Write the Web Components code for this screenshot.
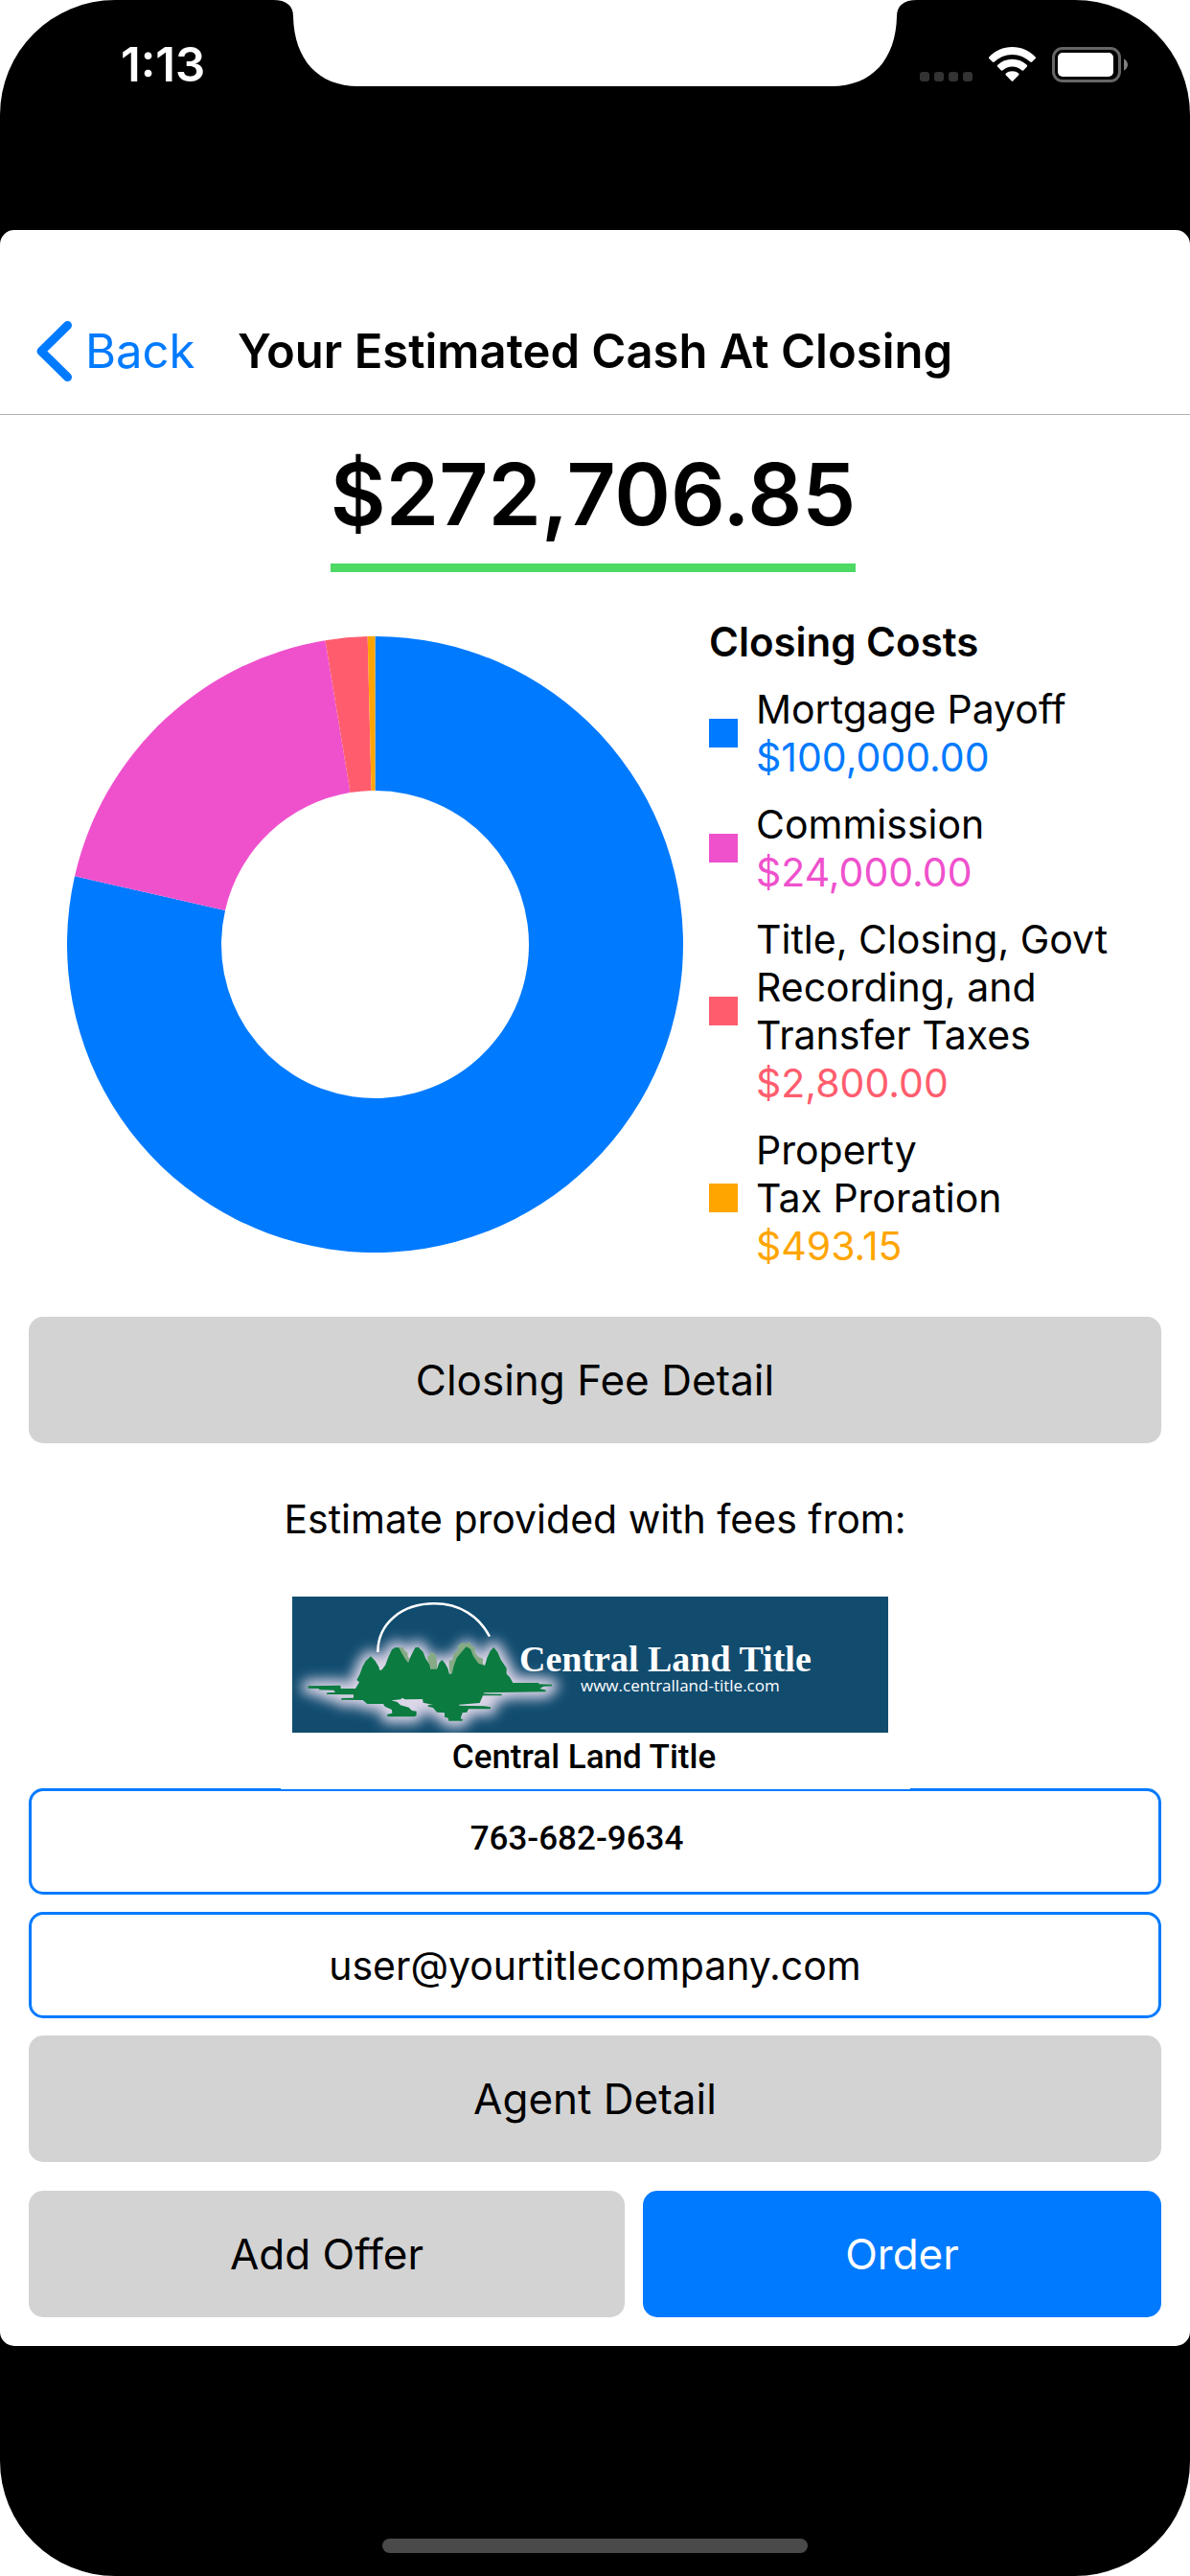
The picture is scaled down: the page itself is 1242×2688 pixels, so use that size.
<!DOCTYPE html>
<html lang="en">
<head>
<meta charset="utf-8">
<meta name="viewport" content="width=device-width, initial-scale=1">
<title>Your Estimated Cash At Closing</title>
<style>
  html { background: #fff; }
  body {
    margin: 0;
    color: #000;
    font-family: Inter, "Liberation Sans", sans-serif;
    font-size: 41px;
    line-height: 50px;
    --blue: #007aff;
    --grey: #d3d3d3;
    --green: #4cd964;
  }
</style>
</head>
<body>
<phone-shell>
  <status-bar slot="status" time="1:13"></status-bar>
  <closing-estimate></closing-estimate>
</phone-shell>

<script>
const define = (name, html, setup) => {
  const template = document.createElement('template');
  template.innerHTML = html;
  customElements.define(name, class extends HTMLElement {
    constructor() {
      super();
      this.attachShadow({ mode: 'open' }).append(template.content.cloneNode(true));
    }
    connectedCallback() {
      if (setup) setup(this, this.shadowRoot);
    }
  });
};

/* Black device body with rounded corners, a white sheet and the home indicator */
define('phone-shell', `
  <style>
    :host { display: flex; flex-direction: column; min-height: 100vh; background: #000; border-radius: 120px; overflow: hidden; }
    main { background: #fff; border-radius: 15px; }
    footer { flex: 1; min-height: 240px; box-sizing: border-box; display: flex; align-items: flex-end; justify-content: center; padding-bottom: 24px; }
    .home { width: 444px; max-width: 60%; height: 15px; border-radius: 8px; background: #4a4a4a; }
  </style>
  <slot name="status"></slot>
  <main><slot></slot></main>
  <footer><div class="home"></div></footer>
`);

define('status-bar', `
  <style>
    :host { display: grid; grid-template-columns: 1fr auto 1fr; align-items: start; height: 240px; color: #fff; }
    time { padding: 38px 0 0 126px; font-size: 49px; line-height: 60px; font-weight: 600; }
    svg { display: block; }
    .icons { display: flex; justify-content: flex-end; align-items: flex-end; gap: 17px; padding: 49px 65px 0 0; }
  </style>
  <time></time>
  <svg width="672" height="90" viewBox="0 0 672 90" aria-hidden="true">
    <path fill="#fff" d="M0 0C14 0 21 6 21 17C22 62 47 90 89 90H583C625 90 650 62 651 17C651 6 658 0 672 0Z"/>
  </svg>
  <div class="icons">
    <svg width="55" height="11" viewBox="0 0 55 11" fill="#333" aria-hidden="true">
      <rect width="10" height="10" rx="3"/><rect x="15" width="10" height="10" rx="3"/>
      <rect x="30" width="10" height="10" rx="3"/><rect x="45" width="10" height="10" rx="3"/>
    </svg>
    <svg width="49" height="37" viewBox="0 0 49 37" fill="#fff" aria-hidden="true">
      <path d="M24.500 0C34 0 42.500 4 48.500 10.200C49.200 11 49.200 11.700 48.500 12.300L45.200 15.600C44.500 16.300 43.800 16.200 43.200 15.600C38.300 10.900 31.700 8 24.500 8S10.700 10.900 5.800 15.600C5.200 16.200 4.500 16.300 3.800 15.600L.5 12.300C-.2 11.700-.2 11 .5 10.200C6.500 4 15 0 24.500 0Z"/>
      <path d="M24.500 12.700C30.500 12.700 35.700 15 39.700 18.700C40.400 19.400 40.400 20.200 39.700 20.800L36.300 24.200C35.700 24.900 35 24.900 34.300 24.300C31.700 22 28.300 20.500 24.500 20.500S17.300 22 14.700 24.300C14 24.900 13.300 24.900 12.700 24.200L9.300 20.800C8.600 20.200 8.600 19.400 9.300 18.700C13.300 15 18.500 12.700 24.500 12.700Z"/>
      <path d="M24.500 25.200C27.100 25.200 29.300 26 31 27.400C31.700 28 31.700 28.700 31.100 29.400L25.500 35.200C24.800 35.900 24.200 35.900 23.500 35.200L17.900 29.400C17.300 28.700 17.300 28 18 27.400C19.700 26 21.900 25.200 24.500 25.200Z"/>
    </svg>
    <svg width="79" height="37" viewBox="0 0 79 37" aria-hidden="true">
      <rect x="1.500" y="1.500" width="69" height="34" rx="9.500" fill="none" stroke="#666" stroke-width="3"/>
      <rect x="6" y="6" width="58" height="25" rx="5" fill="#fff"/>
      <path d="M75 12.500C77.500 13.500 79 16 79 18.500S77.500 23.500 75 24.500Z" fill="#808080"/>
    </svg>
  </div>
`, (host, root) => { root.querySelector('time').textContent = host.getAttribute('time'); });

define('nav-header', `
  <style>
    :host { display: grid; grid-template-columns: 1fr auto 1fr; align-items: center; box-sizing: border-box; height: 193px; padding: 61px 38px 0; border-bottom: 1px solid #b2b2b2; font-size: 49px; line-height: 60px; }
    a { display: flex; align-items: center; gap: 13px; color: var(--blue); text-decoration: none; }
    h1 { margin: 0; font: inherit; font-weight: 600; }
    svg { display: block; }
  </style>
  <a href="#back">
    <svg width="38" height="63" viewBox="0 0 38 63" fill="none" stroke="currentColor" stroke-width="9" stroke-linecap="round" stroke-linejoin="round" aria-hidden="true"><path d="M32.500 4.500L5 31.500L32.500 58.500"/></svg>
    <span>Back</span>
  </a>
  <h1><slot></slot></h1>
`);

define('cash-total', `
  <style>
    :host { display: flex; justify-content: center; padding: 29px 4px 0 0; }
    output { padding-bottom: 18px; border-bottom: 9px solid var(--green); font-size: 89px; line-height: 108px; font-weight: 600; }
  </style>
  <output><slot></slot></output>
`);

/* Ring whose slices follow the "values" and "colors" lists, clockwise from twelve o'clock */
define('donut-chart', `
  <style>
    :host { display: block; }
    svg { display: block; width: 100%; }
  </style>
  <svg viewBox="0 0 643 643" role="img" aria-label="Closing costs"></svg>
`, (host, root) => {
  const values = host.getAttribute('values').split(' ').map(Number);
  const colors = host.getAttribute('colors').split(' ');
  const total = values.reduce((a, b) => a + b, 0);
  const c = 321.5, outer = 321.5, inner = 160.5;
  const at = (r, t) => (c + r * Math.sin(t)).toFixed(2) + ' ' + (c - r * Math.cos(t)).toFixed(2);
  let angle = 0;
  root.querySelector('svg').innerHTML = values.map((v, i) => {
    const from = angle, to = angle += v / total * Math.PI * 2;
    const big = to - from > Math.PI ? 1 : 0;
    return `<path fill="${colors[i]}" d="M${at(outer, from)}A${outer} ${outer} 0 ${big} 1 ${at(outer, to)}L${at(inner, to)}A${inner} ${inner} 0 ${big} 0 ${at(inner, from)}Z"/>`;
  }).join('');
});

define('cost-item', `
  <style>
    :host { display: flex; align-items: center; gap: 19px; }
    i { flex: none; width: 30px; height: 30px; background: var(--tone); }
    b { display: block; font-weight: 400; color: var(--tone); }
  </style>
  <i></i>
  <div><slot></slot><b></b></div>
`, (host, root) => {
  host.style.setProperty('--tone', host.getAttribute('color'));
  root.querySelector('b').textContent = host.getAttribute('amount');
});

define('action-button', `
  <style>
    :host { display: block; }
    button { display: block; width: 100%; height: 132px; margin: 0; padding: 0; border: 0; border-radius: 15px; background: var(--grey); color: #000; font: inherit; font-size: 44px; cursor: pointer; }
    :host([primary]) button { background: var(--blue); color: #fff; }
  </style>
  <button type="button"><slot></slot></button>
`);

define('contact-link', `
  <style>
    :host { display: block; }
    a { display: flex; align-items: center; justify-content: center; box-sizing: border-box; height: 111px; border: 3px solid var(--blue); border-radius: 15px; color: #000; text-decoration: none; }
    :host([compact]) a { padding: 0 38px 5px 0; font-family: Roboto, sans-serif; font-size: 35px; font-weight: 500; }
  </style>
  <a><slot></slot></a>
`, (host, root) => { root.querySelector('a').href = host.getAttribute('to'); });

define('title-company', `
  <style>
    :host { display: block; position: relative; z-index: 1; box-sizing: border-box; width: 657px; max-width: 100%; margin: 0 auto -1px; padding: 0 23px 13px 12px; background: #fff; }
    svg { display: block; width: 100%; }
    p { margin: 6px 12px 0 0; text-align: center; font-family: Roboto, sans-serif; font-size: 35px; line-height: 40px; font-weight: 500; }
  </style>
  <svg viewBox="0 0 622 142">
    <defs>
      <filter id="halo" x="-20%" y="-40%" width="140%" height="180%"><feGaussianBlur stdDeviation="19"/></filter>
      <path id="land" d="M95 328L196 326L197 336L243 336L255 316L247 309L257 290L265 268L275 250L291 235L305 250L316 268L319 279L326 277L337 262L345 240L357 214L368 207L379 208L388 225L400 245L408 255L416 235L430 208L440 206L455 222L462 240L475 262L478 275L498 275L505 256L514 246L524 258L532 272L537 290L545 290L551 265L560 240L575 222L590 205L603 212L612 235L628 257L648 264L655 240L665 218L676 207L688 222L698 245L716 272L716 290L726 300L736 318L817 318L817 322L858 323L858 328L832 329L820 336L840 341L838 346L647 349L643 352L702 353L700 358L642 358L632 381L568 386L568 389L645 391L666 394L665 400L597 400L592 410L578 412L572 430L579 433L577 437L535 437L533 428L522 425L522 412L498 410L486 396L470 392L470 388L486 387L455 380L453 369L398 370L390 365L384 370L355 373L374 378L384 388L410 395L420 405L434 407L434 420L428 424L344 424L342 417L358 413L357 402L335 392L330 384L280 384L266 372L198 371L200 366L237 365L237 355L152 354L155 349L180 348L175 341L130 340L128 336L95 335Z"/>
      <clipPath id="frame"><rect width="622" height="142"/></clipPath>
    </defs>
    <rect width="622" height="142" fill="#114c6f"/>
    <g clip-path="url(#frame)">
      <g transform="scale(.33333) translate(-45 -48)">
        <use href="#land" fill="#dcd6e8" stroke="#dcd6e8" stroke-width="40" stroke-linejoin="round" filter="url(#halo)"/>
        <path fill="#86ab84" d="M378 208L392 206L396 216L406 224L407 236L413 242L405 260L396 250ZM468 236L476 232L480 221L492 228L497 242L499 262L498 276L490 286L486 298L474 294L480 276L472 262ZM536 272L536 250L548 244L550 228L562 216L566 200L578 193L590 196L600 190L606 202L617 208L618 226L630 238L642 242L642 258L648 265L622 262L590 215L552 290L540 291Z"/>
        <use href="#land" fill="#0b7b40"/>
        <path fill="none" stroke="#fff" stroke-width="7.500" d="M313 222C313 130 390 70 490 70C570 70 630 110 663 173"/>
      </g>
    </g>
    <text x="237" y="78" fill="#fff" font-family="Liberation Serif, serif" font-size="38" font-weight="700">Central Land Title</text>
    <text x="301" y="99" fill="#fff" font-family="Open Sans, sans-serif" font-size="17">www.centralland-title.com</text>
  </svg>
  <p><slot></slot></p>
`);

define('closing-estimate', `
  <style>
    :host { display: block; }
    .costs { display: grid; grid-template-columns: minmax(0, 643px) minmax(0, 1fr); align-items: center; gap: 27px; padding: 48px 60px 49px 70px; }
    .legend { display: flex; flex-direction: column; gap: 20px; }
    h2 { margin: 0; font-size: 42px; line-height: 50px; font-weight: 600; }
    .body { padding: 0 30px 30px; }
    .note { margin: 54px 0 56px; text-align: center; }
    .contacts { display: flex; flex-direction: column; gap: 18px; }
    .offers { display: grid; grid-template-columns: 23fr 20fr; gap: 19px; margin-top: 30px; }
  </style>
  <nav-header>Your Estimated Cash At Closing</nav-header>
  <cash-total>$272,706.85</cash-total>
  <section class="costs">
    <donut-chart values="100000 24000 2800 493.15" colors="#007aff #ef51cd #ff5d6e #ffa500"></donut-chart>
    <div class="legend">
      <h2>Closing Costs</h2>
      <cost-item color="#007aff" amount="$100,000.00">Mortgage Payoff</cost-item>
      <cost-item color="#ef51cd" amount="$24,000.00">Commission</cost-item>
      <cost-item color="#ff5d6e" amount="$2,800.00">Title, Closing, Govt Recording, and Transfer&nbsp;Taxes</cost-item>
      <cost-item color="#ffa500" amount="$493.15">Property Tax&nbsp;Proration</cost-item>
    </div>
  </section>
  <section class="body">
    <action-button>Closing Fee Detail</action-button>
    <p class="note">Estimate provided with fees from:</p>
    <title-company>Central Land Title</title-company>
    <div class="contacts">
      <contact-link compact to="tel:763-682-9634">763-682-9634</contact-link>
      <contact-link to="mailto:user@yourtitlecompany.com">user@yourtitlecompany.com</contact-link>
      <action-button>Agent Detail</action-button>
    </div>
    <div class="offers">
      <action-button>Add Offer</action-button>
      <action-button primary>Order</action-button>
    </div>
  </section>
`);
</script>
</body>
</html>
